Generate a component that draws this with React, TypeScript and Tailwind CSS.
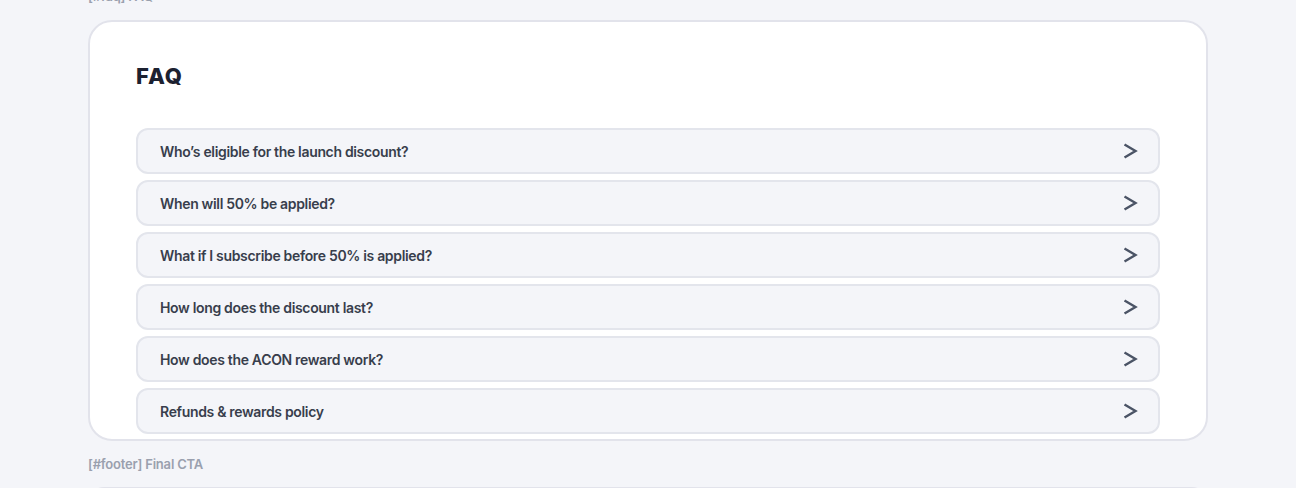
import React from "react";

const faqs = [
  "Who’s eligible for the launch discount?",
  "When will 50% be applied?",
  "What if I subscribe before 50% is applied?",
  "How long does the discount last?",
  "How does the ACON reward work?",
  "Refunds & rewards policy",
];

function Chevron() {
  return (
    <svg width="16" height="16" viewBox="0 0 16 16" fill="none" className="shrink-0">
      <path d="M2.5 1.5 L13.5 8 L2.5 14.5" stroke="#4b5466" strokeWidth="2.4" strokeLinecap="butt" strokeLinejoin="miter" />
    </svg>
  );
}

export default function App() {
  return (
    <div
      className="min-h-[488px] h-[488px] overflow-hidden bg-[#f4f5f9]"
      style={{ fontFamily: "Inter, 'Noto Sans', sans-serif" }}
    >
      <div className="w-[1120px] ml-[88px] -mt-[12px] flex flex-col">
        <div className="text-[13px] leading-[16px] font-semibold tracking-[-0.2px] text-[#9aa0ae]">[#faq] FAQ</div>
        <div className="mt-[16px] h-[421px] overflow-hidden rounded-[24px] border-2 border-[#e2e3eb] bg-white px-[46px] pt-[38px]">
          <h2 className="text-[22px] leading-[32px] font-extrabold tracking-[1px] text-[#1c2130]">FAQ</h2>
          <div className="mt-[36px] flex flex-col gap-[6px]">
            {faqs.map((q) => (
              <div
                key={q}
                className="flex h-[46px] items-center justify-between rounded-[12px] border-2 border-[#e3e5ec] bg-[#f4f5f9] pl-[22px] pr-[20px]"
              >
                <span className="text-[14px] font-semibold tracking-[-0.33px] text-[#383e4c]">{q}</span>
                <Chevron />
              </div>
            ))}
          </div>
        </div>
        <div className="mt-[15px] text-[13px] leading-[16px] font-semibold tracking-[-0.2px] text-[#9aa0ae]">[#footer] Final CTA</div>
        <div className="mt-[15px] h-[120px] rounded-[16px] border-2 border-[#e2e3eb] bg-white"></div>
      </div>
    </div>
  );
}
